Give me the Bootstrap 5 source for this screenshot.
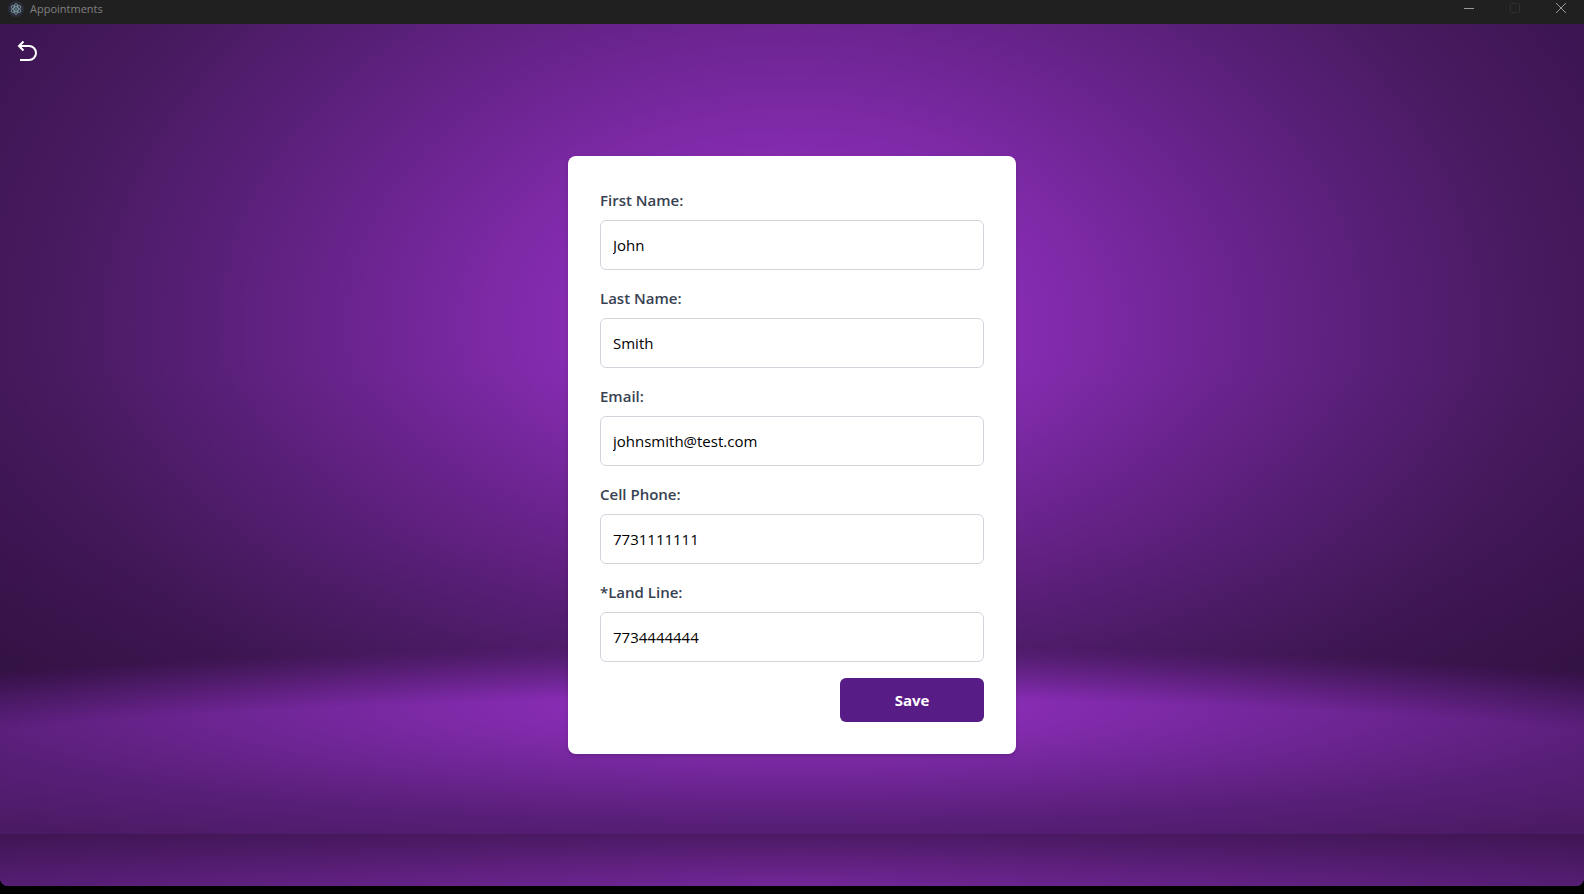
<!DOCTYPE html>
<html lang="en">
<head>
<meta charset="utf-8">
<meta name="viewport" content="width=device-width, initial-scale=1">
<title>Appointments</title>
<link href="https://cdn.jsdelivr.net/npm/bootstrap@5.3.0/dist/css/bootstrap.min.css" rel="stylesheet">
<style>
  body { background: #000; font-family: "Open Sans", "Noto Sans", sans-serif; font-size: 15px; line-height: 24px; }
  .titlebar { background: #202020; color: #808080; height: 24px; padding-bottom: 6px; font-size: 11px; line-height: 18px; }
  .titlebar .app-name { padding-left: 8px; gap: 6px; }
  .win-btn { width: 46px; height: 16px; color: #9a9a9a; }
  .win-btn:disabled { color: #3a3a3a; }

  /* Studio backdrop: lit wall, floor with a curved horizon, front strip */
  .stage {
    margin-bottom: 8px; border-radius: 0 0 8px 8px; isolation: isolate; overflow: hidden;
    background:
      linear-gradient(to bottom, rgba(34, 12, 44, 0) 40%, rgba(34, 12, 44, .14) 60%, rgba(34, 12, 44, .3) 74%),
      radial-gradient(ellipse 58% 74% at 50% 35%, #8e30bd 0%, #852cb1 25%, #6e2593 45%, #5a207a 62%, #481a60 80%, #3b1450 100%);
  }
  .stage::before, .stage::after { content: ""; position: absolute; left: 0; right: 0; bottom: 0; z-index: -1; }
  .stage::before {
    height: 29%;
    background: radial-gradient(ellipse 78% 68% at 50% 28%, #8f30be 0%, #852cb1 20%, #6e2594 45%, #591f79 68%, #4b1a64 95%);
    -webkit-mask: radial-gradient(ellipse 125% 124% at 50% 126%, #000 82%, rgba(0, 0, 0, .5) 91%, transparent 99%);
    mask: radial-gradient(ellipse 125% 124% at 50% 126%, #000 82%, rgba(0, 0, 0, .5) 91%, transparent 99%);
  }
  .stage::after {
    height: 6%;
    background:
      linear-gradient(to bottom, rgba(30, 10, 38, .4), rgba(30, 10, 38, 0)),
      radial-gradient(ellipse 56% 400% at 50% 100%, #732799, #521c6f);
  }
  .back-btn { top: 16px; left: 16px; width: 24px; height: 24px; color: #fff; }
  .form-panel { width: 448px; max-width: 100%; padding: 32px; border-radius: 8px; box-shadow: 0 2px 4px rgba(0, 0, 0, .15); }
  .form-panel .form-label { color: #374151; font-weight: 600; margin-bottom: 8px; }
  .form-panel .form-control { height: 50px; padding: 12px; border-color: #d1d5db; border-radius: 6px; color: #000; font-size: 15px; line-height: 24px; }
  .save-btn { width: 144px; height: 44px; background: #581c87; color: #fff; border-radius: 6px; font-size: 15px; font-weight: 700; }
  .save-btn:hover { background: #6b21a8; color: #fff; }
</style>
</head>
<body class="d-flex flex-column min-vh-100">
  <header class="titlebar d-flex justify-content-between">
    <div class="app-name d-flex align-items-center">
      <svg width="16" height="16" viewBox="0 0 16 16" aria-hidden="true">
        <circle cx="8" cy="8" r="8" fill="#2b2e3a"/>
        <g fill="none" stroke="#8fb4be" stroke-width=".7">
          <ellipse cx="8" cy="8" rx="5.4" ry="2.2" transform="rotate(-30 8 8)"/>
          <ellipse cx="8" cy="8" rx="5.4" ry="2.2" transform="rotate(30 8 8)"/>
          <ellipse cx="8" cy="8" rx="5.4" ry="2.2" transform="rotate(90 8 8)"/>
        </g>
        <circle cx="8" cy="8" r=".8" fill="#9fc9d3"/>
      </svg>
      <span>Appointments</span>
    </div>
    <div class="d-flex">
      <button type="button" class="win-btn btn p-0 border-0 d-flex justify-content-center" aria-label="Minimize">
        <svg width="10" height="16" viewBox="0 0 10 16"><path d="M0 8.5h10" stroke="currentColor"/></svg>
      </button>
      <button type="button" class="win-btn btn p-0 border-0 d-flex justify-content-center" aria-label="Maximize" disabled>
        <svg width="10" height="16" viewBox="0 0 10 16"><rect x=".5" y="3.5" width="9" height="9" rx="1" fill="none" stroke="currentColor"/></svg>
      </button>
      <button type="button" class="win-btn btn p-0 border-0 d-flex justify-content-center" aria-label="Close">
        <svg width="10" height="16" viewBox="0 0 10 16"><path d="M0 3l10 10M10 3L0 13" stroke="currentColor"/></svg>
      </button>
    </div>
  </header>

  <main class="stage position-relative flex-grow-1 d-flex align-items-center justify-content-center">
    <button type="button" class="back-btn btn p-0 border-0 position-absolute d-flex" aria-label="Back">
      <svg width="24" height="24" viewBox="0 0 24 24" fill="none" stroke="currentColor" stroke-width="2"><path d="M7.500 1.500L3 6l4.500 4.500M3 6h10a7 7 0 0 1 0 14H4"/></svg>
    </button>
    <form class="form-panel bg-white">
      <div class="mb-3">
        <label class="form-label d-block" for="first">First Name:</label>
        <input class="form-control" id="first" type="text" value="John">
      </div>
      <div class="mb-3">
        <label class="form-label d-block" for="last">Last Name:</label>
        <input class="form-control" id="last" type="text" value="Smith">
      </div>
      <div class="mb-3">
        <label class="form-label d-block" for="email">Email:</label>
        <input class="form-control" id="email" type="email" value="johnsmith@test.com">
      </div>
      <div class="mb-3">
        <label class="form-label d-block" for="cell">Cell Phone:</label>
        <input class="form-control" id="cell" type="tel" value="7731111111">
      </div>
      <div class="mb-3">
        <label class="form-label d-block" for="land">*Land Line:</label>
        <input class="form-control" id="land" type="tel" value="7734444444">
      </div>
      <div class="d-flex justify-content-end">
        <button type="submit" class="save-btn btn border-0 p-0">Save</button>
      </div>
    </form>
  </main>
<script src="https://cdn.jsdelivr.net/npm/bootstrap@5.3.0/dist/js/bootstrap.bundle.min.js"></script>
</body>
</html>
